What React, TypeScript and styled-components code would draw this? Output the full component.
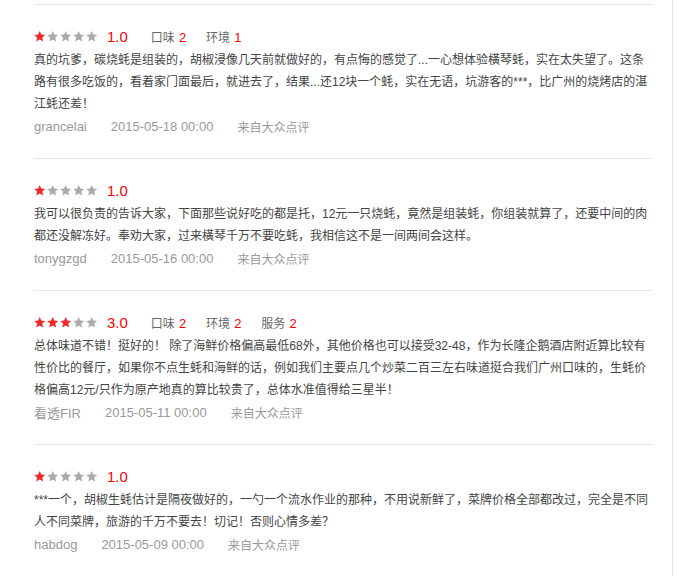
import React from 'react';
import styled, { createGlobalStyle } from 'styled-components';

interface SubScore {
  label: string;
  value: number;
}

interface Review {
  id: number;
  score: number;
  subScores: SubScore[];
  content: string;
  user: string;
  time: string;
  source: string;
}

const reviews: Review[] = [
  {
    id: 1,
    score: 1,
    subScores: [
      { label: '口味', value: 2 },
      { label: '环境', value: 1 },
    ],
    content:
      '真的坑爹，碳烧蚝是组装的，胡椒浸像几天前就做好的，有点悔的感觉了...一心想体验橫琴蚝，实在太失望了。这条路有很多吃饭的，看着家门面最后，就进去了，结果...还12块一个蚝，实在无语，坑游客的***，比广州的烧烤店的湛江蚝还差！',
    user: 'grancelai',
    time: '2015-05-18 00:00',
    source: '来自大众点评',
  },
  {
    id: 2,
    score: 1,
    subScores: [],
    content:
      '我可以很负责的告诉大家，下面那些说好吃的都是托，12元一只烧蚝，竟然是组装蚝，你组装就算了，还要中间的肉都还没解冻好。奉劝大家，过来橫琴千万不要吃蚝，我相信这不是一间两间会这样。',
    user: 'tonygzgd',
    time: '2015-05-16 00:00',
    source: '来自大众点评',
  },
  {
    id: 3,
    score: 3,
    subScores: [
      { label: '口味', value: 2 },
      { label: '环境', value: 2 },
      { label: '服务', value: 2 },
    ],
    content:
      '总体味道不错！挺好的！ 除了海鲜价格偏高最低68外，其他价格也可以接受32-48，作为长隆企鹅酒店附近算比较有性价比的餐厅，如果你不点生蚝和海鲜的话，例如我们主要点几个炒菜二百三左右味道挺合我们广州口味的，生蚝价格偏高12元/只作为原产地真的算比较贵了，总体水准值得给三星半！',
    user: '看透FIR',
    time: '2015-05-11 00:00',
    source: '来自大众点评',
  },
  {
    id: 4,
    score: 1,
    subScores: [],
    content:
      '***一个，胡椒生蚝估计是隔夜做好的，一勺一个流水作业的那种，不用说新鲜了，菜牌价格全部都改过，完全是不同人不同菜牌，旅游的千万不要去！切记！否则心情多差？',
    user: 'habdog',
    time: '2015-05-09 00:00',
    source: '来自大众点评',
  },
];

const GlobalStyle = createGlobalStyle`
  html, body {
    margin: 0;
    padding: 0;
    background: #fff;
  }
  body {
    font-family: "Liberation Sans", "Noto Sans CJK SC", sans-serif;
  }
`;

const Panel = styled.div`
  width: 673px;
  min-height: 576px;
  box-sizing: border-box;
  padding: 4px 20px 0 34px;
  border-right: 1px solid #e6e6e6;
`;

const List = styled.ul`
  list-style: none;
  margin: 0;
  padding: 0;
`;

const Item = styled.li`
  border-top: 1px solid #e6e6e6;
  padding: 19px 0 21px;
`;

const Header = styled.div`
  display: flex;
  align-items: center;
  height: 24px;
`;

const Stars = styled.div`
  display: flex;
  align-items: center;
`;

const StarIcon = styled.svg`
  display: block;
  width: 13px;
  height: 11px;
`;

const Score = styled.span`
  margin-left: 8px;
  padding-right: 3px;
  font-size: 15px;
  color: #f00;
`;

const SubItem = styled.span`
  margin-left: 20px;
  font-size: 12px;
  color: #666;
`;

const SubValue = styled.span`
  margin-left: 4px;
  font-size: 13px;
  color: #f00;
`;

const Content = styled.p`
  margin: 1px 0 0;
  font-size: 12px;
  line-height: 22px;
  color: #444;
`;

const Meta = styled.div`
  display: flex;
  align-items: center;
  height: 22px;
  font-size: 13px;
  color: #999;
`;

const MetaText = styled.span<{ $small?: boolean }>`
  margin-right: 24px;
  font-size: ${(p) => (p.$small ? '12px' : '13px')};
`;

const Star: React.FC<{ on: boolean }> = ({ on }) => (
  <StarIcon viewBox="0 0 13 11">
    <path
      d="M5.7 0 L7.3 3.6 L11.2 4 L8.3 6.6 L9.1 10.5 L5.7 8.5 L2.3 10.5 L3.1 6.6 L0.2 4 L4.1 3.6 Z"
      fill={on ? '#ee2a2a' : '#aaaaaa'}
    />
  </StarIcon>
);

const ReviewItem: React.FC<{ review: Review }> = ({ review }) => (
  <Item>
    <Header>
      <Stars>
        {[1, 2, 3, 4, 5].map((n) => (
          <Star key={n} on={n <= review.score} />
        ))}
      </Stars>
      <Score>{review.score.toFixed(1)}</Score>
      {review.subScores.map((s) => (
        <SubItem key={s.label}>
          {s.label}
          <SubValue>{s.value}</SubValue>
        </SubItem>
      ))}
    </Header>
    <Content>{review.content}</Content>
    <Meta>
      <MetaText>{review.user}</MetaText>
      <MetaText>{review.time}</MetaText>
      <MetaText $small>{review.source}</MetaText>
    </Meta>
  </Item>
);

const App: React.FC = () => {
  return (
    <>
      <GlobalStyle />
      <Panel>
        <List>
          {reviews.map((r) => (
            <ReviewItem key={r.id} review={r} />
          ))}
        </List>
      </Panel>
    </>
  );
};

export default App;
